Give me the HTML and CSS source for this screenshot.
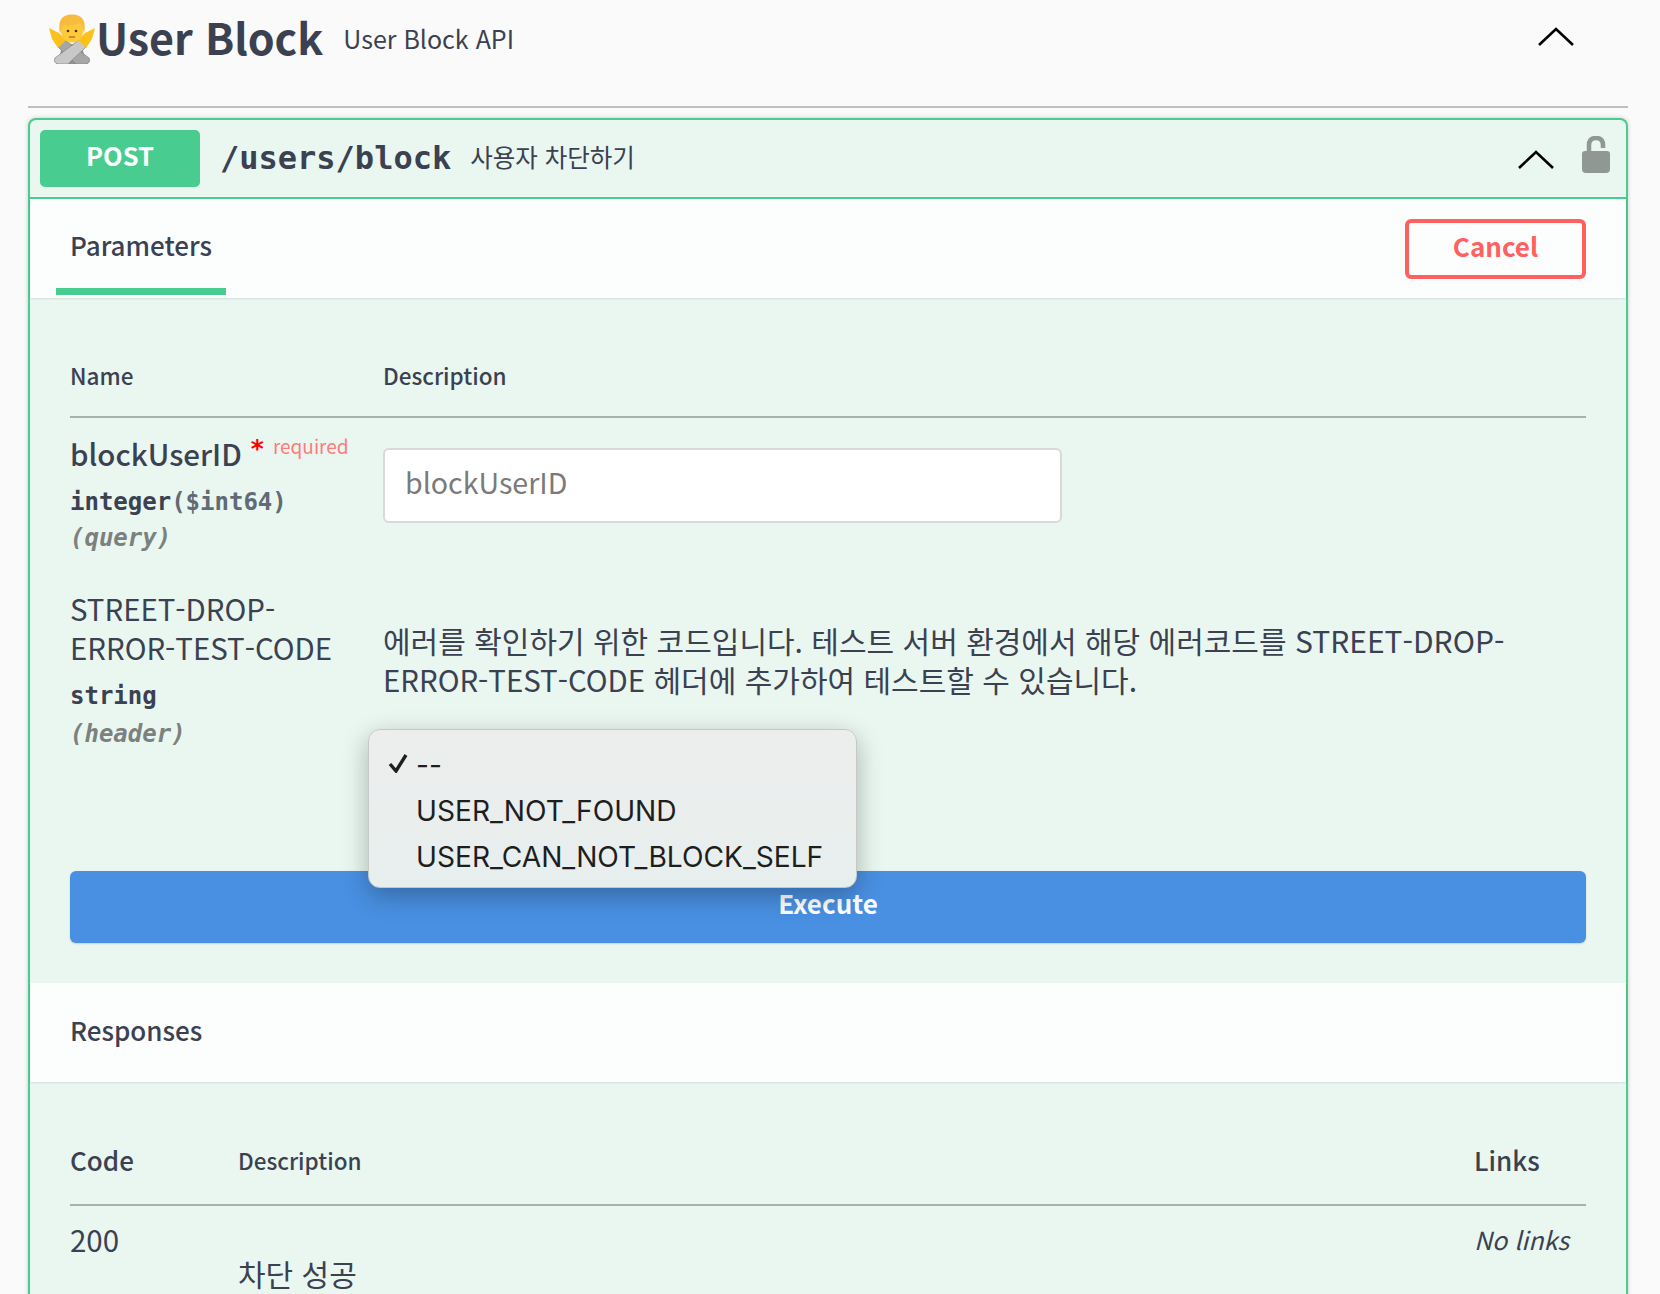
FILE: index.html
```html
<!DOCTYPE html>
<html lang="ko">
<head>
    <meta charset="UTF-8">
    <title>User Block API</title>
    <link rel="stylesheet" href="styles.css">
</head>
<body>
    <div class="section-head">
        <svg class="emoji" viewBox="0 0 46 50">
            <path d="M14 30 L8 50 H38 L32 30 Z" fill="#8f8f8f"/>
            <path d="M9 33 L16 26 L40 44 Q42 49 37 50 H27 Z" fill="#a6a6a6" stroke="#888" stroke-width="0.8"/>
            <path d="M37 33 L30 26 L6 44 Q4 49 9 50 H19 Z" fill="#c8c8c8" stroke="#8c8c8c" stroke-width="0.8"/>
            <path d="M0 14 Q6 17 10 19 L17 26 L9 34 L3 25 Z" fill="#fcc21b"/>
            <path d="M46 14 Q40 17 36 19 L29 26 L37 34 L43 25 Z" fill="#fcc21b"/>
            <ellipse cx="23" cy="17" rx="11" ry="11.5" fill="#fcc93a"/>
            <path d="M11 20 Q7 0.5 23 0.5 Q39 0.5 35 20 Q34 12 30 9 Q21 13 15 11 Q13 13 11 20 Z" fill="#f6bb3f"/>
            <circle cx="19" cy="17" r="1.3" fill="#4a3410"/>
            <circle cx="27" cy="17" r="1.3" fill="#4a3410"/>
            <path d="M20 23 H26" stroke="#a5661a" stroke-width="1.2"/>
        </svg>
        <h2 class="section-title">User Block</h2>
        <span class="section-desc">User Block API</span>
        <svg class="chevron section-chevron" viewBox="0 0 36 20"><path d="M1 18 L18 2 L35 18"/></svg>
    </div>

    <div class="section-rule"></div>

    <div class="opblock">
        <div class="summary">
            <span class="method">POST</span>
            <span class="path">/users/block</span>
            <span class="summary-desc">사용자 차단하기</span>
            <svg class="chevron summary-chevron" viewBox="0 0 36 20"><path d="M1 18 L18 2 L35 18"/></svg>
            <svg class="lock" viewBox="0 0 28 37">
                <path d="M7 16 V9 Q7 2 14 2 Q21 2 21 9 V12" fill="none" stroke="#8f9892" stroke-width="4.5"/>
                <path d="M3 15 H25 Q28 15 28 18 V33 Q28 37 24 37 H4 Q0 37 0 33 V18 Q0 15 3 15 Z" fill="#8f9892"/>
            </svg>
        </div>

        <div class="tab-head">
            <div class="tab">Parameters</div>
            <button class="cancel">Cancel</button>
        </div>

        <div class="params">
            <div class="param-grid param-head">
                <div>Name</div>
                <div>Description</div>
            </div>

            <div class="param-grid param-row">
                <div>
                    <div class="param-name">blockUserID<span class="star">*</span><span class="required">required</span></div>
                    <div class="param-type">integer<span class="format">($int64)</span></div>
                    <div class="param-in">(query)</div>
                </div>
                <div><input class="text-input" placeholder="blockUserID"></div>
            </div>

            <div class="param-grid param-row-two">
                <div>
                    <div class="param-name plain">STREET-DROP-<br>ERROR-TEST-CODE</div>
                    <div class="param-type">string</div>
                    <div class="param-in">(header)</div>
                </div>
                <div class="param-desc">에러를 확인하기 위한 코드입니다. 테스트 서버 환경에서 해당 에러코드를 STREET-DROP-<br><span class="latin">ERROR-TEST-CODE</span> 헤더에 추가하여 테스트할 수 있습니다.</div>
            </div>

            <div class="menu">
                <div class="menu-item"><svg class="check" viewBox="0 0 20 20"><path d="M2 11 L8 18 L18 2"/></svg>--</div>
                <div class="menu-item">USER_NOT_FOUND</div>
                <div class="menu-item">USER_CAN_NOT_BLOCK_SELF</div>
            </div>

            <button class="execute">Execute</button>
        </div>

        <div class="responses-head">Responses</div>

        <div class="responses">
            <div class="resp-grid resp-head">
                <div class="resp-code">Code</div>
                <div class="resp-desc">Description</div>
                <div class="resp-links">Links</div>
            </div>
            <div class="resp-grid resp-row">
                <div>200</div>
                <div class="resp-text">차단 성공</div>
                <div class="no-links">No links</div>
            </div>
        </div>
    </div>
</body>
</html>
```

FILE: styles.css
```css
html, body {
    height: 100%;
    overflow: hidden;
}
body {
    margin: 0;
    padding: 0 32px 0 28px;
    background: #fafafa;
    color: #3b4151;
    font-family: "Noto Sans CJK KR", "Noto Sans", sans-serif;
}
.section-head {
    display: flex;
    align-items: center;
    height: 78px;
    padding: 0 54px 0 21px;
}
.emoji {
    width: 46px;
    height: 50px;
    flex: none;
}
.section-title {
    margin: -6px 0 0 1px;
    font-size: 43px;
    font-weight: 700;
    line-height: 78px;
}
.section-desc {
    margin-left: 20px;
    margin-top: -2px;
    font-size: 25px;
}
.chevron {
    fill: none;
    stroke: #000;
    stroke-width: 2.6;
}
.section-chevron {
    width: 36px;
    height: 20px;
    margin-left: auto;
    margin-top: -4px;
}
.section-rule {
    height: 2px;
    margin-top: 28px;
    background: #bfbfbf;
}
.opblock {
    margin-top: 10px;
    border: 2px solid #49cc90;
    border-bottom: none;
    border-radius: 8px 8px 0 0;
    background: #e9f7f0;
    box-shadow: 0 0 4px rgba(0, 0, 0, 0.2);
}
.summary {
    display: flex;
    align-items: center;
    height: 77px;
    padding: 0 16px 0 10px;
    border-bottom: 2px solid #49cc90;
}
.method {
    width: 160px;
    height: 57px;
    margin-top: -1px;
    border-radius: 5px;
    background: #49cc90;
    color: #fff;
    font-size: 25.5px;
    font-weight: 700;
    line-height: 50px;
    text-align: center;
}
.path {
    margin-left: 20px;
    margin-top: -2px;
    font-family: "DejaVu Sans Mono", monospace;
    font-size: 32px;
    font-weight: 700;
}
.summary-desc {
    margin-left: 19px;
    margin-top: -4px;
    font-size: 24.5px;
}
.summary-chevron {
    width: 36px;
    height: 20px;
    margin-left: auto;
    margin-top: 2px;
}
.lock {
    width: 28px;
    height: 37px;
    margin-left: 28px;
    margin-top: -8px;
}
.tab-head {
    position: relative;
    display: flex;
    justify-content: space-between;
    align-items: flex-start;
    height: 99px;
    padding: 0 40px 0 26px;
    background: #fcfefe;
    box-shadow: 0 1px 2px rgba(0, 0, 0, 0.1);
}
.tab {
    width: 170px;
    height: 96px;
    border-bottom: 7px solid #49cc90;
    box-sizing: border-box;
    font-size: 26px;
    font-weight: 500;
    line-height: 92px;
    text-align: center;
}
.cancel {
    width: 181px;
    height: 60px;
    margin-top: 20px;
    padding: 0 0 8px;
    border: 4px solid #ff6060;
    border-radius: 6px;
    background: transparent;
    color: #ff6060;
    font-family: inherit;
    font-size: 26px;
    font-weight: 700;
}
.params {
    position: relative;
    padding: 0 40px 40px 40px;
}
.param-grid {
    display: grid;
    grid-template-columns: 313px 1fr;
}
.param-head {
    height: 120px;
    padding-top: 59px;
    box-sizing: border-box;
    border-bottom: 2px solid #a5b3ab;
    font-size: 22.5px;
    font-weight: 500;
    line-height: 36px;
}
.param-row {
    height: 171px;
    padding-top: 11px;
    box-sizing: border-box;
}
.param-name {
    font-size: 29.5px;
    font-weight: 500;
    line-height: 48px;
    white-space: nowrap;
}
.param-name.plain {
    font-size: 29.4px;
    font-weight: 400;
    line-height: 39px;
}
.plain + .param-type {
    margin-top: 11px;
}
.plain ~ .param-in {
    margin-top: 2px;
}
.star {
    margin-left: 9px;
    color: #f00;
    font-family: "DejaVu Sans", sans-serif;
    font-size: 25px;
    font-weight: 700;
    line-height: 0;
    vertical-align: 9px;
}
.required {
    margin-left: 9px;
    color: #ff7b7b;
    font-size: 19px;
    font-weight: 400;
    line-height: 0;
    vertical-align: 12px;
}
.param-type {
    margin-top: 7px;
    font-family: "DejaVu Sans Mono", monospace;
    font-size: 24px;
    font-weight: 700;
    line-height: 36px;
}
.format {
    color: #606b75;
}
.param-in {
    margin-top: 0;
    color: #7c807f;
    font-family: "DejaVu Sans Mono", monospace;
    font-size: 24px;
    font-style: italic;
    font-weight: 700;
    line-height: 36px;
}
.text-input {
    display: block;
    width: 679px;
    height: 75px;
    margin-top: 19px;
    padding: 0 20px 8px;
    border: 2px solid #d9d9d9;
    border-radius: 6px;
    box-sizing: border-box;
    background: #fff;
    font-family: inherit;
    font-size: 28.6px;
}
.text-input::placeholder {
    color: #7a7a7a;
    opacity: 1;
}
.param-row-two {
    height: 282px;
}
.param-desc {
    padding-top: 32px;
    font-size: 30px;
    line-height: 39px;
    white-space: nowrap;
}
.latin {
    font-size: 29.4px;
}
.menu {
    position: absolute;
    left: 338px;
    top: 431px;
    z-index: 2;
    width: 489px;
    height: 159px;
    padding-top: 12px;
    box-sizing: border-box;
    border: 1px solid #c4c9c6;
    border-radius: 12px;
    background: linear-gradient(#ededed, #e7efee);
    box-shadow: 0 8px 26px rgba(0, 0, 0, 0.28);
    color: #1e1e1e;
    font-family: Inter, sans-serif;
    font-size: 28.15px;
}
.menu-item {
    position: relative;
    height: 46px;
    padding-left: 47px;
    line-height: 46px;
    white-space: nowrap;
}
.check {
    position: absolute;
    left: 19px;
    top: 11px;
    width: 20px;
    height: 20px;
    fill: none;
    stroke: #1e1e1e;
    stroke-width: 3.4;
}
.execute {
    display: block;
    width: 100%;
    height: 72px;
    padding-bottom: 10px;
    border: none;
    border-radius: 6px;
    background: #4990e2;
    box-shadow: 0 1px 2px rgba(0, 0, 0, 0.15);
    color: #fff;
    font-family: inherit;
    font-size: 26px;
    font-weight: 700;
}
.responses-head {
    position: relative;
    height: 99px;
    padding-left: 40px;
    background: #fcfefe;
    box-shadow: 0 1px 2px rgba(0, 0, 0, 0.1);
    font-size: 26px;
    font-weight: 500;
    line-height: 94px;
}
.responses {
    padding: 0 40px 60px 40px;
}
.resp-grid {
    display: grid;
    grid-template-columns: 168px 1fr 112px;
}
.resp-head {
    height: 124px;
    padding-top: 56px;
    box-sizing: border-box;
    border-bottom: 2px solid #a5b3ab;
    align-items: center;
    align-content: start;
    font-weight: 500;
    line-height: 44px;
}
.resp-code, .resp-links {
    font-size: 26px;
}
.resp-desc {
    font-size: 22.5px;
}
.resp-row {
    padding-top: 11px;
    font-size: 29.5px;
    line-height: 44px;
}
.resp-text {
    padding-top: 34px;
    font-size: 30px;
}
.no-links {
    font-size: 25px;
    font-style: italic;
}
```
